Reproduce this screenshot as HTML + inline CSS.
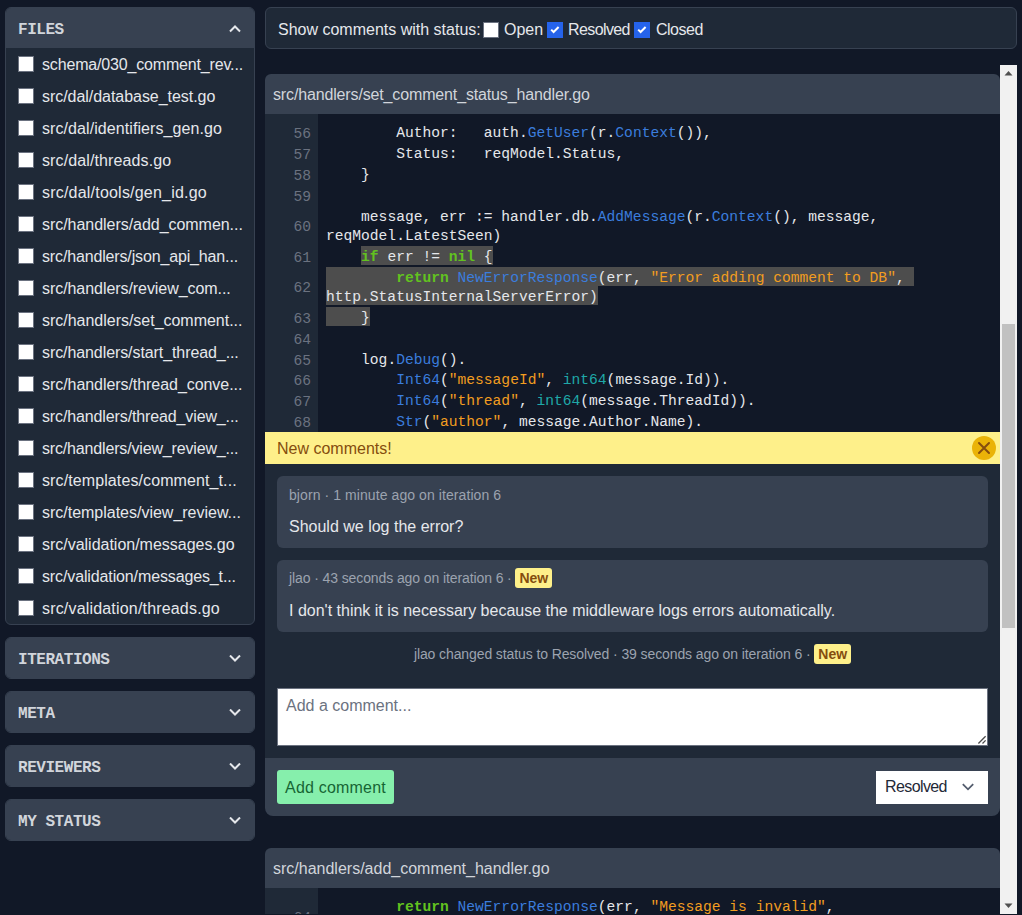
<!DOCTYPE html>
<html><head><meta charset="utf-8"><style>
*{box-sizing:border-box;margin:0;padding:0}
html,body{width:1022px;height:915px;overflow:hidden;background:#111827;font-family:"Liberation Sans",sans-serif;font-size:16px;color:#e5e7eb}
.abs{position:absolute}
.panel{position:absolute;left:5px;width:250px;border:1px solid #374151;border-radius:6px;overflow:hidden;background:#1f2937}
.ph{height:40px;background:#374151;position:relative}
.ph .t{position:absolute;left:12px;top:2px;line-height:40px;font-family:"Liberation Mono",monospace;font-weight:bold;font-size:16px;letter-spacing:-0.45px;color:#d1d5db}
.ph svg{position:absolute;left:223px;top:17px}
.frow{height:32px;position:relative;white-space:nowrap}
.cb{position:absolute;width:16px;height:16px;background:#fff;border:1px solid #6b7280}
.frow .cb{left:12px;top:8px}
.frow .n{position:absolute;left:36px;top:1px;line-height:32px;color:#e5e7eb}
.status{position:absolute;left:265px;top:7px;width:752px;height:42px;background:#1f2937;border:1px solid #374151;border-radius:6px}
.status .t{position:absolute;top:2px;line-height:40px;white-space:nowrap}
.cb.chk{background:#2563eb;border-color:#2563eb}
.cb svg{position:absolute;left:0;top:0}
.scroll{position:absolute;left:265px;top:65px;width:752px;height:849px;overflow:hidden}
.sb{position:absolute;left:735px;top:0;width:17px;height:849px;background:#f1f1f1}
.fh{position:absolute;left:0;width:735px;height:40px;background:#374151;border-radius:6px 6px 0 0}
.fh .t{position:absolute;left:8px;top:1px;line-height:40px;color:#d1d5db}
.code{position:absolute;left:0;width:735px;background:#111827;font-family:"Liberation Mono",monospace;font-size:14.62px;color:#e5e7eb;overflow:hidden}
.gut{position:absolute;left:0;top:0;bottom:0;width:53px;background:#1f2937}
.row{position:relative;padding:0.96875px 0;line-height:19px}
.ln{position:absolute;left:0;width:46px;top:3px;bottom:-3px;display:flex;align-items:center;justify-content:flex-end;color:#6b7280}
.tx{position:relative;top:2px;margin-left:61px;white-space:pre;tab-size:4}
.selb{position:absolute;background:#4d4d4d;height:19px}
.f{color:#3b7ddd}
.k{color:#62c21f;font-weight:bold}
.s{color:#f29d20}
.ty{color:#1fa8a8}
.banner{position:absolute;left:0;top:367px;width:735px;height:32px;background:#fef08a;color:#854d0e}
.thread{position:absolute;left:0;top:399px;width:735px;height:294px;background:#1f2937}
.card{position:absolute;left:12px;width:711px;background:#374151;border-radius:6px}
.meta{position:absolute;left:12px;font-size:14px;color:#9ca3af;line-height:20px;white-space:nowrap;letter-spacing:-0.1px}
.body{position:absolute;left:12px;line-height:20px;color:#e5e7eb;white-space:nowrap}
.new{display:inline-block;background:#fef08a;color:#854d0e;font-weight:bold;padding:0 4px;line-height:20px;border-radius:3px;letter-spacing:0}
.statusline{left:0;width:735px;text-align:center}
.ta{position:absolute;left:12px;top:224px;width:711px;height:58px;background:#fff;border:1px solid #6b7280}
.ph2{position:absolute;left:8px;top:7px;line-height:20px;color:#6b7280}
.actions{position:absolute;left:0;top:693px;width:735px;height:58px;background:#374151;border-radius:0 0 8px 8px}
.btn{position:absolute;left:12px;top:12px;height:34px;width:117px;text-align:center;padding-top:1px;line-height:34px;letter-spacing:0.2px;background:#86efac;color:#166534;border-radius:3px}
.sel2{position:absolute;left:611px;top:13px;width:112px;height:33px;background:#fff;color:#1f2937}
</style></head><body>
<div class="panel" style="top:7px;height:618px"><div class="ph"><span class="t">FILES</span><svg width="12" height="8" viewBox="0 0 12 8"><path d="M1 6.5 L6 1.5 L11 6.5" fill="none" stroke="#e5e7eb" stroke-width="2"/></svg></div><div class="frow"><span class="cb"></span><span class="n" style="letter-spacing:-0.167px">schema/030_comment_rev...</span></div><div class="frow"><span class="cb"></span><span class="n" style="letter-spacing:-0.043px">src/dal/database_test.go</span></div><div class="frow"><span class="cb"></span><span class="n" style="letter-spacing:0.080px">src/dal/identifiers_gen.go</span></div><div class="frow"><span class="cb"></span><span class="n" style="letter-spacing:0.118px">src/dal/threads.go</span></div><div class="frow"><span class="cb"></span><span class="n" style="letter-spacing:0.209px">src/dal/tools/gen_id.go</span></div><div class="frow"><span class="cb"></span><span class="n" style="letter-spacing:-0.040px">src/handlers/add_commen...</span></div><div class="frow"><span class="cb"></span><span class="n" style="letter-spacing:-0.148px">src/handlers/json_api_han...</span></div><div class="frow"><span class="cb"></span><span class="n" style="letter-spacing:-0.060px">src/handlers/review_com...</span></div><div class="frow"><span class="cb"></span><span class="n" style="letter-spacing:-0.019px">src/handlers/set_comment...</span></div><div class="frow"><span class="cb"></span><span class="n" style="letter-spacing:-0.086px">src/handlers/start_thread_...</span></div><div class="frow"><span class="cb"></span><span class="n" style="letter-spacing:-0.056px">src/handlers/thread_conve...</span></div><div class="frow"><span class="cb"></span><span class="n" style="letter-spacing:-0.126px">src/handlers/thread_view_...</span></div><div class="frow"><span class="cb"></span><span class="n" style="letter-spacing:-0.163px">src/handlers/view_review_...</span></div><div class="frow"><span class="cb"></span><span class="n" style="letter-spacing:0.104px">src/templates/comment_t...</span></div><div class="frow"><span class="cb"></span><span class="n" style="letter-spacing:-0.011px">src/templates/view_review...</span></div><div class="frow"><span class="cb"></span><span class="n" style="letter-spacing:-0.016px">src/validation/messages.go</span></div><div class="frow"><span class="cb"></span><span class="n" style="letter-spacing:-0.126px">src/validation/messages_t...</span></div><div class="frow"><span class="cb"></span><span class="n" style="letter-spacing:0.179px">src/validation/threads.go</span></div></div><div class="panel" style="top:637px;height:42px"><div class="ph"><span class="t">ITERATIONS</span><svg width="12" height="8" viewBox="0 0 12 8"><path d="M1 0.5 L6 5.5 L11 0.5" fill="none" stroke="#e5e7eb" stroke-width="2"/></svg></div></div><div class="panel" style="top:691px;height:42px"><div class="ph"><span class="t">META</span><svg width="12" height="8" viewBox="0 0 12 8"><path d="M1 0.5 L6 5.5 L11 0.5" fill="none" stroke="#e5e7eb" stroke-width="2"/></svg></div></div><div class="panel" style="top:745px;height:42px"><div class="ph"><span class="t">REVIEWERS</span><svg width="12" height="8" viewBox="0 0 12 8"><path d="M1 0.5 L6 5.5 L11 0.5" fill="none" stroke="#e5e7eb" stroke-width="2"/></svg></div></div><div class="panel" style="top:799px;height:42px"><div class="ph"><span class="t">MY STATUS</span><svg width="12" height="8" viewBox="0 0 12 8"><path d="M1 0.5 L6 5.5 L11 0.5" fill="none" stroke="#e5e7eb" stroke-width="2"/></svg></div></div>
<div class="status">
<span class="t" style="left:12px">Show comments with status:</span>
<span class="cb" style="left:217px;top:14px"></span>
<span class="t" style="left:238px">Open</span>
<span class="cb chk" style="left:281px;top:14px"><svg width="14" height="14" viewBox="0 0 14 14"><path d="M3.2 6.6 L5.6 9 L10.6 4" fill="none" stroke="#fff" stroke-width="2"/></svg></span>
<span class="t" style="left:302px;letter-spacing:-0.6px">Resolved</span>
<span class="cb chk" style="left:368px;top:14px"><svg width="14" height="14" viewBox="0 0 14 14"><path d="M3.2 6.6 L5.6 9 L10.6 4" fill="none" stroke="#fff" stroke-width="2"/></svg></span>
<span class="t" style="left:390px;letter-spacing:-0.5px">Closed</span>
</div>
<div class="scroll">
<div class="fh" style="top:9px"><span class="t" style="letter-spacing:-0.145px">src/handlers/set_comment_status_handler.go</span></div>
<div class="code" style="top:49px;height:318px;padding-top:7.1px"><div class="gut"></div><div class="row"><span class="ln">56</span><div class="tx">		Author:   auth.<span class="f">GetUser</span>(r.<span class="f">Context</span>()),</div></div><div class="row"><span class="ln">57</span><div class="tx">		Status:   reqModel.Status,</div></div><div class="row"><span class="ln">58</span><div class="tx">	}</div></div><div class="row"><span class="ln">59</span><div class="tx"> </div></div><div class="row"><span class="ln">60</span><div class="tx">	message, err := handler.db.<span class="f">AddMessage</span>(r.<span class="f">Context</span>(), message,
reqModel.LatestSeen)</div></div><div class="row"><span class="ln">61</span><div class="selb" style="left:96.08px;top:0.96875px;width:131.55px"></div><div class="tx">	<span class="k">if</span> err != <span class="k">nil</span> {</div></div><div class="row"><span class="ln">62</span><div class="selb" style="left:61.00px;top:0.96875px;width:587.59px"></div><div class="selb" style="left:61.00px;top:19.96875px;width:271.87px"></div><div class="tx">		<span class="k">return</span> <span class="f">NewErrorResponse</span>(err, <span class="s">"Error adding comment to DB"</span>,
http.StatusInternalServerError)</div></div><div class="row"><span class="ln">63</span><div class="selb" style="left:61.00px;top:0.96875px;width:43.85px"></div><div class="tx">	}</div></div><div class="row"><span class="ln">64</span><div class="tx"> </div></div><div class="row"><span class="ln">65</span><div class="tx">	log.<span class="f">Debug</span>().</div></div><div class="row"><span class="ln">66</span><div class="tx">		<span class="f">Int64</span>(<span class="s">"messageId"</span>, <span class="ty">int64</span>(message.Id)).</div></div><div class="row"><span class="ln">67</span><div class="tx">		<span class="f">Int64</span>(<span class="s">"thread"</span>, <span class="ty">int64</span>(message.ThreadId)).</div></div><div class="row"><span class="ln">68</span><div class="tx">		<span class="f">Str</span>(<span class="s">"author"</span>, message.Author.Name).</div></div><div class="row"><span class="ln">69</span><div class="tx">		<span class="f">Msg</span>(<span class="s">"Comment added"</span>)</div></div></div>
<div class="banner"><span class="abs" style="left:12px;top:1px;line-height:32px">New comments!</span>
<svg class="abs" style="left:707px;top:4px" width="24" height="24" viewBox="0 0 24 24"><circle cx="12" cy="12" r="12" fill="#eab308"/><path d="M7 7 L17 17 M17 7 L7 17" stroke="#854d0e" stroke-width="2" stroke-linecap="round"/></svg></div>
<div class="thread">
<div class="card" style="top:12px;height:72px">
<div class="meta" style="top:8.5px;letter-spacing:0.08px">bjorn · 1 minute ago on iteration 6</div>
<div class="body" style="top:41px">Should we log the error?</div>
</div>
<div class="card" style="top:96px;height:72px">
<div class="meta" style="top:8px">jlao · 43 seconds ago on iteration 6 · <span class="new">New</span></div>
<div class="body" style="top:41px">I don't think it is necessary because the middleware logs errors automatically.</div>
</div>
<div class="meta statusline" style="top:180px">jlao changed status to Resolved · 39 seconds ago on iteration 6 · <span class="new">New</span></div>
<div class="ta"><span class="ph2">Add a comment...</span>
<svg class="abs" style="right:0;bottom:0" width="12" height="12" viewBox="0 0 12 12"><path d="M3.4 10.5 L10.6 3.3 M7.5 10.5 L10.6 7.4" stroke="#4b4b4b" stroke-width="1.3"/></svg></div>
</div>
<div class="actions">
<div class="btn">Add comment</div>
<div class="sel2"><span class="abs" style="left:9px;top:0;line-height:32px;letter-spacing:-0.6px">Resolved</span>
<svg class="abs" style="left:86px;top:12px" width="13" height="9" viewBox="0 0 13 9"><path d="M0.8 1.2 L6 6.3 L11.2 1.2" fill="none" stroke="#535c6d" stroke-width="1.8"/></svg></div>
</div>
<div class="fh" style="top:783px"><span class="t">src/handlers/add_comment_handler.go</span></div>
<div class="code" style="top:823px;height:60px;padding-top:7.1px"><div class="gut"></div><div class="row"><span class="ln">64</span><div class="tx">		<span class="k">return</span> <span class="f">NewErrorResponse</span>(err, <span class="s">"Message is invalid"</span>,
http.StatusBadRequest)</div></div></div>
<div class="sb">
<svg class="abs" style="left:4px;top:5px" width="9" height="6" viewBox="0 0 9 6"><path d="M0.5 5.5 L4.5 1 L8.5 5.5Z" fill="#505050"/></svg>
<div class="abs" style="left:2px;top:259px;width:13px;height:304px;background:#c1c1c1"></div>
<svg class="abs" style="left:4px;top:838px" width="9" height="6" viewBox="0 0 9 6"><path d="M0.5 0.5 L4.5 5 L8.5 0.5Z" fill="#505050"/></svg>
</div>
</div>
</body></html>
